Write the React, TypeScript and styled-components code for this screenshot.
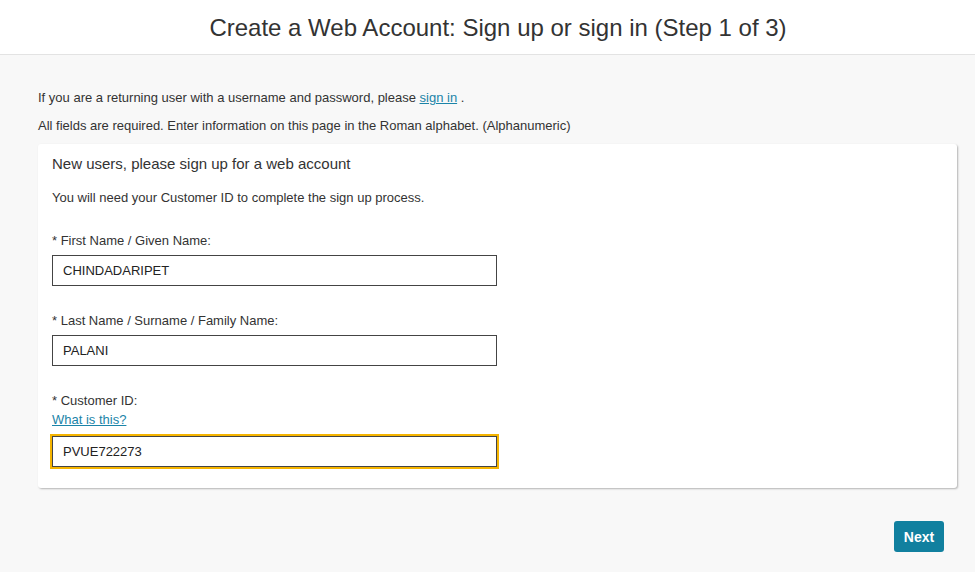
import React, { useEffect, useRef } from 'react';
import styled, { createGlobalStyle } from 'styled-components';

const GlobalStyle = createGlobalStyle`
    html, body {
        margin: 0;
        padding: 0;
        background: #f8f8f8;
        font-family: "Liberation Sans", Arial, sans-serif;
        color: #333;
    }
`;

const Page = styled.div`
    width: 975px;
    height: 572px;
    display: flex;
    flex-direction: column;
    overflow: hidden;
`;

const Header = styled.header`
    height: 54px;
    background: #fff;
    border-bottom: 1px solid #e3e3e3;
    display: flex;
    align-items: center;
    justify-content: center;
    padding-left: 21px;
`;

const Title = styled.h1`
    margin: 0;
    font-size: 24px;
    line-height: 28px;
    font-weight: normal;
    color: #333;
    padding-top: 2px;
`;

const Main = styled.main`
    padding: 35px 18px 0 38px;
    display: flex;
    flex-direction: column;
`;

const Note = styled.p`
    margin: 0 0 13px;
    font-size: 13px;
    line-height: 15px;
    color: #333;

    &:last-of-type {
        margin-bottom: 11px;
    }
`;

const Link = styled.a`
    color: #1b84a8;
    text-decoration: underline;
    cursor: pointer;
`;

const Card = styled.section`
    background: #fff;
    border-radius: 3px;
    box-shadow: 1px 1px 2px rgba(0, 0, 0, 0.28);
    padding: 11px 14px 21px;
    display: flex;
    flex-direction: column;
`;

const CardTitle = styled.h2`
    margin: 0 0 18px;
    font-size: 15px;
    line-height: 17px;
    font-weight: normal;
    color: #333;
`;

const CardNote = styled.p`
    margin: 0 0 28px;
    font-size: 13px;
    line-height: 15px;
    color: #333;
`;

const Field = styled.div`
    display: flex;
    flex-direction: column;
    margin-bottom: 27px;

    &:last-child {
        margin-bottom: 0;
    }
`;

const Label = styled.label`
    font-size: 13px;
    line-height: 15px;
    margin-bottom: 7px;
    color: #333;
`;

const CustomerLabel = styled(Label)`
    margin-bottom: 4px;
`;

const HelpLink = styled(Link)`
    font-size: 13px;
    line-height: 15px;
    margin: 0 0 9px;
    align-self: flex-start;
`;

const Input = styled.input<{ $focused?: boolean }>`
    box-sizing: border-box;
    width: 445px;
    height: 31px;
    padding: 0 10px;
    font-family: "Liberation Sans", Arial, sans-serif;
    font-size: 13px;
    color: #222;
    background: #fff;
    border: 1px solid #444;
    border-radius: 0;
    outline: none;
    ${({ $focused }) =>
        $focused &&
        `
            box-shadow: 0 0 0 2px #f5b400;
            caret-color: #000;
        `}
`;

const Footer = styled.div`
    display: flex;
    justify-content: flex-end;
    padding: 33px 13px 0 0;
`;

const NextButton = styled.button`
    width: 50px;
    height: 31px;
    border: none;
    border-radius: 3px;
    background: #11809f;
    color: #fff;
    font-family: "Liberation Sans", Arial, sans-serif;
    font-size: 14px;
    font-weight: bold;
    cursor: pointer;
`;

export default function App() {
    const idRef = useRef<HTMLInputElement>(null);

    useEffect(() => {
        const el = idRef.current;
        if (el) {
            el.focus();
            el.setSelectionRange(el.value.length, el.value.length);
        }
    }, []);

    return (
        <Page>
            <GlobalStyle />
            <Header>
                <Title>Create a Web Account: Sign up or sign in (Step 1 of 3)</Title>
            </Header>
            <Main>
                <Note>
                    If you are a returning user with a username and password, please <Link>sign in</Link> .
                </Note>
                <Note>All fields are required. Enter information on this page in the Roman alphabet. (Alphanumeric)</Note>
                <Card>
                    <CardTitle>New users, please sign up for a web account</CardTitle>
                    <CardNote>You will need your Customer ID to complete the sign up process.</CardNote>
                    <Field>
                        <Label htmlFor="first">* First Name / Given Name:</Label>
                        <Input id="first" defaultValue="CHINDADARIPET" />
                    </Field>
                    <Field>
                        <Label htmlFor="last">* Last Name / Surname / Family Name:</Label>
                        <Input id="last" defaultValue="PALANI" />
                    </Field>
                    <Field>
                        <CustomerLabel htmlFor="cid">* Customer ID:</CustomerLabel>
                        <HelpLink>What is this?</HelpLink>
                        <Input id="cid" ref={idRef} $focused defaultValue="PVUE722273" />
                    </Field>
                </Card>
                <Footer>
                    <NextButton>Next</NextButton>
                </Footer>
            </Main>
        </Page>
    );
}
